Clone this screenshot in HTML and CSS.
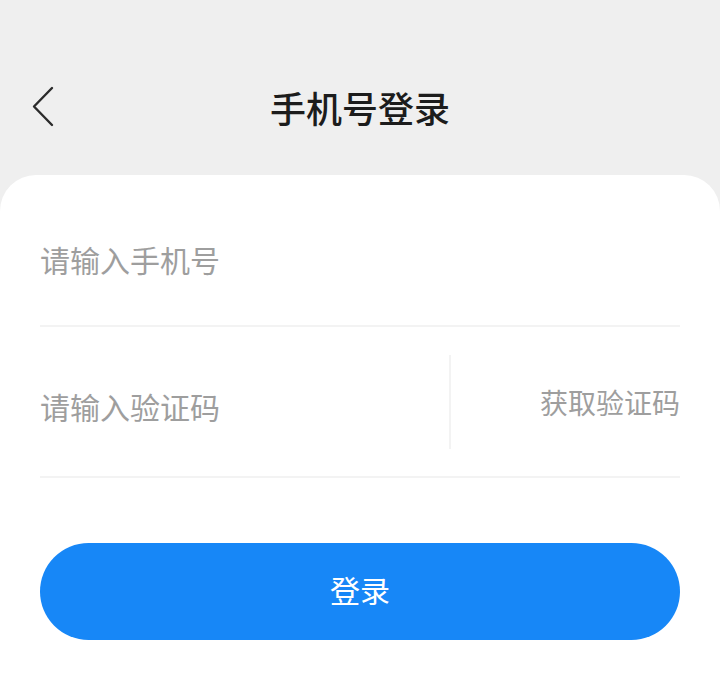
FILE: index.html
```html
<!DOCTYPE html>
<html lang="zh-CN">
<head>
<meta charset="utf-8">
<title>手机号登录</title>
<link rel="stylesheet" href="styles.css">
</head>
<body>
<div class="page">
  <header class="topbar">
    <button class="back" aria-label="返回">
      <svg width="24" height="42" viewBox="0 0 24 42">
        <path d="M21 2 L3 20.5 L21 39" fill="none" stroke="#2b2b2b" stroke-width="2.4" stroke-linecap="round" stroke-linejoin="round"/>
      </svg>
    </button>
    <h1 class="title">手机号登录</h1>
  </header>
  <main class="card">
    <div class="field field-phone">
      <span class="placeholder">请输入手机号</span>
    </div>
    <div class="field field-code">
      <span class="placeholder code-input">请输入验证码</span>
      <span class="vline"></span>
      <span class="get-code">获取验证码</span>
    </div>
    <button class="login-btn">登录</button>
  </main>
</div>
</body>
</html>
```

FILE: styles.css
```css
* { box-sizing: border-box; }
html, body {
  margin: 0;
  padding: 0;
  height: 100%;
}
body {
  background: #efefef;
  font-family: "Noto Sans CJK SC", "Noto Sans", sans-serif;
}
.page {
  min-height: 678px;
  display: flex;
  flex-direction: column;
}
.topbar {
  height: 175px;
  position: relative;
  display: flex;
  align-items: center;
  justify-content: center;
  padding-top: 39px;
}
.back {
  position: absolute;
  left: 31px;
  top: 86px;
  padding: 0;
  border: 0;
  background: none;
  display: flex;
}
.title {
  margin: 0;
  font-size: 36px;
  font-weight: 500;
  color: #1c1c1c;
  letter-spacing: 0;
  line-height: 1;
}
.card {
  flex: 1;
  background: #ffffff;
  border-radius: 36px 36px 0 0;
  padding: 0 40px;
  display: flex;
  flex-direction: column;
}
.field {
  display: flex;
  align-items: center;
  border-bottom: 2px solid #f3f3f3;
}
.field-phone {
  height: 152px;
  padding-top: 18px;
}
.field-code {
  height: 151px;
}
.placeholder {
  font-size: 30px;
  color: #9e9e9e;
  line-height: 1;
}
.code-input {
  flex: 1;
  padding-top: 8px;
}
.vline {
  width: 2px;
  height: 94px;
  background: #f3f3f3;
}
.get-code {
  width: 229px;
  text-align: right;
  font-size: 28px;
  color: #9e9e9e;
  line-height: 1;
}
.login-btn {
  margin-top: 65px;
  height: 97px;
  border: 0;
  border-radius: 49px;
  background: #1787f7;
  color: #ffffff;
  font-family: "Noto Sans CJK SC", "Noto Sans", sans-serif;
  font-size: 30px;
  line-height: 1;
  padding: 0 0 6px;
}
```
